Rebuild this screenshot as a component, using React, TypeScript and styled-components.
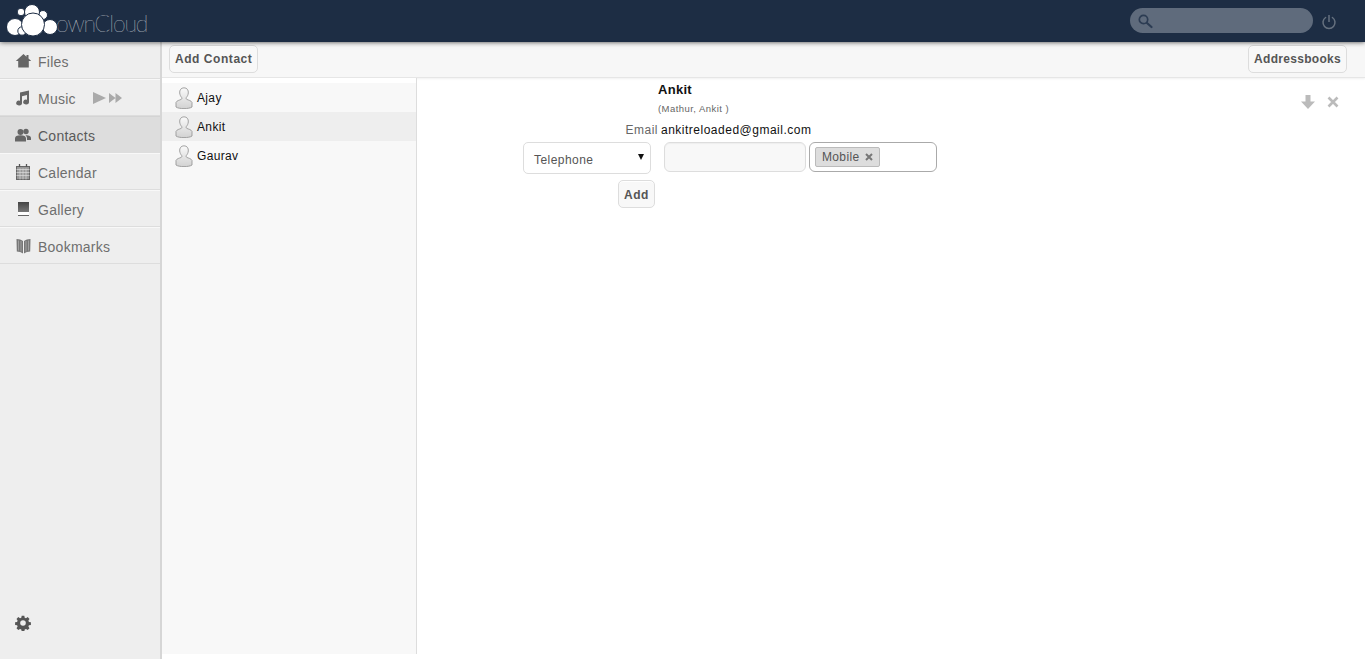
import React from "react";
import styled, { createGlobalStyle } from "styled-components";

const Global = createGlobalStyle`
  html, body { margin: 0; padding: 0; height: 100%; background: #fff; }
  #root { height: 100%; }
  * { box-sizing: border-box; }
  body { font-family: "Liberation Sans", Arial, sans-serif; font-size: 12px; color: #000; overflow: hidden; }
`;

const Page = styled.div`
  width: 1365px; height: 659px; display: flex; flex-direction: column; position: relative; overflow: hidden;
`;
const Header = styled.header`
  height: 42px; flex: none; background: #1d2d44; display: flex; align-items: center; justify-content: space-between;
  box-shadow: 0 0 5px rgba(0,0,0,.75); position: relative; z-index: 3;
`;
const Logo = styled.div`
  display: flex; align-items: flex-end; padding-left: 7px; height: 100%;
`;
const CloudSvg = styled.svg`
  position: relative; z-index: 1; flex: none;
`;
const LogoWord = styled.span`
  font-family: Lato, "Open Sans", sans-serif; font-weight: 100; font-size: 23px; letter-spacing: -1.1px; color: #fff;
  margin-left: -7px; margin-bottom: 4px; line-height: 30px;
`;
const HeaderRight = styled.div`
  display: flex; align-items: center; gap: 8px; padding-right: 28px; margin-top: -1px;
`;
const Search = styled.div`
  width: 183px; height: 25px; border-radius: 13px; background: #5f6b7c; display: flex; align-items: center; padding-left: 7px;
`;
const PowerIcon = styled.svg`
  margin-top: 2px;
`;
const Body = styled.div`
  flex: 1; display: flex; min-height: 0;
`;
const Sidebar = styled.nav`
  width: 162px; flex: none; background: #eee; border-right: 2px solid #d6d6d6; display: flex; flex-direction: column; position: relative;
`;
const NavItem = styled.a<{ $active?: boolean }>`
  height: 37px; display: flex; align-items: center; padding: 3px 0 0 15px; font-size: 14px; letter-spacing: .25px;
  color: ${p => (p.$active ? "#5a5a5a" : "#6e6e6e")};
  background: ${p => (p.$active ? "#ddd" : "transparent")};
  border-bottom: 1px solid #ddd;
  box-shadow: inset 0 1px 0 ${p => (p.$active ? "#d4d4d4" : "#f8f8f8")};
`;
const NavIcon = styled.span`
  width: 16px; height: 16px; display: inline-flex; align-items: center; justify-content: center; margin-right: 7px; margin-top: -2px;
`;
const MusicControls = styled.span`
  display: inline-flex; align-items: center; gap: 3px; margin-left: 17px; margin-top: -2px;
`;
const Settings = styled.div`
  margin-top: auto; padding: 0 0 27px 15px; height: 44px; display: flex;
`;
const Main = styled.div`
  flex: 1; min-width: 0; display: flex; flex-direction: column;
`;
const Toolbar = styled.div`
  height: 36px; flex: none; background: #f7f7f7; border-bottom: 1px solid #e6e6e6; box-shadow: 0 1px 2px rgba(0,0,0,.06);
  display: flex; align-items: flex-start; justify-content: space-between; padding: 3px 18px 0 7px;
`;
const Button = styled.button<{ $tight?: boolean }>`
  height: 28px; padding: 0 5px; font-family: "Liberation Sans", Arial, sans-serif; font-size: 12px; font-weight: 700;
  letter-spacing: ${p => (p.$tight ? ".3px" : ".55px")}; color: #555;
  background: #f8f8f8; border: 1px solid #ddd; border-radius: 5px; box-shadow: inset 0 1px 0 #fff;
`;
const Columns = styled.div`
  flex: 1; min-height: 0; display: flex; padding-bottom: 5px;
`;
const ContactList = styled.ul`
  list-style: none; margin: 0; padding: 5px 0 0; width: 255px; flex: none; background: #f8f8f8; border-right: 1px solid #ddd;
  background-image: linear-gradient(#fff, #fff); background-size: 100% 5px; background-repeat: no-repeat;
`;
const ContactRow = styled.li<{ $active?: boolean }>`
  height: 29px; display: flex; align-items: center; padding-left: 13px; gap: 4px; font-size: 12px; letter-spacing: .35px;
  background: ${p => (p.$active ? "#eee" : "transparent")}; color: #111;
`;
const Detail = styled.section`
  flex: 1; min-width: 0; position: relative; padding-left: 106px;
`;
const NameBlock = styled.div`
  padding-left: 135px; height: 42px;
`;
const Name = styled.div`
  font-size: 13px; font-weight: 700; letter-spacing: .3px; line-height: 15px; padding-top: 4px; height: 19px; color: #111;
`;
const Nick = styled.div`
  font-size: 9.5px; letter-spacing: .45px; color: #666; margin-top: 6px; line-height: 11px;
`;
const EmailRow = styled.div`
  display: flex; height: 20px; align-items: center; font-size: 12px; letter-spacing: .5px;
`;
const FieldLabel = styled.span`
  width: 135px; text-align: right; color: #666;
`;
const FieldValue = styled.span`
  margin-left: 3px; color: #111;
`;
const PhoneRow = styled.div`
  display: flex; align-items: flex-start; height: 39px; margin-top: 2px;
`;
const SelectBox = styled.div`
  width: 128px; height: 32px; border: 1px solid #ddd; border-radius: 5px; background: #fff; display: flex; align-items: center; justify-content: space-between;
  padding: 3px 6px 0 10px; font-size: 12px; letter-spacing: .45px; color: #555;
`;
const Caret = styled.span`
  width: 0; height: 0; border-left: 3px solid transparent; border-right: 3px solid transparent; border-top: 6px solid #111; margin-top: -5px;
`;
const TextInput = styled.div`
  width: 142px; height: 30px; margin-left: 13px; border: 1px solid #ddd; border-radius: 6px; background: #f8f8f8; box-shadow: inset 0 1px 1px rgba(0,0,0,.04);
`;
const TagBox = styled.div`
  width: 128px; height: 30px; margin-left: 3px; border: 1px solid #aaa; border-radius: 6px; background: #fff; display: flex; align-items: center; padding-left: 5px;
`;
const Tag = styled.span`
  height: 20px; width: 65px; border: 1px solid #bbb; border-radius: 2px; background: #ddd; display: flex; align-items: center; padding-left: 6px; gap: 6px;
  font-size: 12px; letter-spacing: .35px; color: #555;
`;
const AddRow = styled.div`
  width: 132px; display: flex; justify-content: flex-end;
`;
const AddButton = styled(Button)`
  margin-top: -1px; padding-top: 2px;
`;
const DetailActions = styled.div`
  position: absolute; top: 17px; right: 26px; display: flex; align-items: center; gap: 12px;
`;

const Avatar = () => (
  <svg width="18" height="22" viewBox="0 0 18 22">
    <defs>
      <linearGradient id="av" x1="0" y1="0" x2="0" y2="1">
        <stop offset="0" stopColor="#fafafa" />
        <stop offset="1" stopColor="#d2d2d2" />
      </linearGradient>
    </defs>
    <path d="M9 .8c3 0 4.600 2.300 4.300 5.200-.2 2-1 3.400-1.900 4.400-.5.6-.4 1.600.4 2 1.800.8 4.400 1.200 5.200 3v4.600c-1.500 1.100-4.600 1.600-8 1.600s-6.500-.5-8-1.600v-4.600c.8-1.800 3.400-2.200 5.200-3 .8-.4.9-1.400.4-2-.9-1-1.700-2.400-1.900-4.400C4.400 3.100 6 .8 9 .8z" fill="url(#av)" stroke="#999" strokeWidth=".9" />
  </svg>
);

const CloudLogo = () => (
  <CloudSvg width="56" height="42" viewBox="7 0 56 42">
    <g fill="#fff" stroke="#1d2d44" strokeWidth="1">
      <circle cx="21" cy="12" r="3.800" />
      <circle cx="43" cy="15" r="4.500" />
      <circle cx="32" cy="12" r="7.500" />
      <circle cx="15" cy="27" r="8.500" />
      <circle cx="50" cy="27" r="7.500" />
      <circle cx="22" cy="31" r="4.200" />
      <circle cx="33" cy="24.500" r="11.500" />
    </g>
  </CloudSvg>
);

const I = ({ d, w = 16, fill = "#666", vb = "0 0 16 16" }: { d: string; w?: number; fill?: string; vb?: string }) => (
  <svg width={w} height={w} viewBox={vb}><path d={d} fill={fill} /></svg>
);

export default function App() {
  return (
    <Page>
      <Global />
      <Header>
        <Logo>
          <CloudLogo />
          <LogoWord>ownCloud</LogoWord>
        </Logo>
        <HeaderRight>
          <Search>
            <svg width="16" height="16" viewBox="0 0 16 16">
              <circle cx="6.500" cy="6.500" r="4.200" fill="none" stroke="#2c3c53" strokeWidth="1.700" />
              <path d="M10 10l4.500 4" stroke="#2c3c53" strokeWidth="2.200" strokeLinecap="round" />
            </svg>
          </Search>
          <PowerIcon width="16" height="16" viewBox="0 0 16 16" fill="none" stroke="#66717f" strokeWidth="1.500">
            <path d="M8 1v7" />
            <path d="M4.600 3.500a6 6 0 1 0 6.800 0" strokeLinecap="round" />
          </PowerIcon>
        </HeaderRight>
      </Header>
      <Body>
        <Sidebar>
          <NavItem>
            <NavIcon><I d="M8.500 1L.8 8h2.400v6.500h10.600V8h2.400L13.500 5.600V2h-2v1.800z" /></NavIcon>Files
          </NavItem>
          <NavItem>
            <NavIcon><I d="M14 .5L5 2.500v8.300a2.900 2.400 0 1 0 2 2.200V6.200l5-1.100v4.700a2.900 2.400 0 1 0 2 2.200z" /></NavIcon>Music
            <MusicControls>
              <svg width="13" height="12" viewBox="0 0 13 12"><path d="M0 0l13 6-13 6z" fill="#aaa" /></svg>
              <svg width="13" height="12" viewBox="0 0 13 12"><path d="M0 1l6.500 5L0 11zM6.500 1L13 6l-6.500 5z" fill="#aaa" /></svg>
            </MusicControls>
          </NavItem>
          <NavItem $active>
            <NavIcon>
              <svg width="16" height="14" viewBox="0 0 16 14" fill="#666">
                <circle cx="5.500" cy="4" r="3" /><circle cx="11" cy="3.500" r="2.700" />
                <path d="M0 13.500v-3c0-2 2-3.200 5.500-3.200S11 8.500 11 10.500v3zM11.500 7.200c2.500 0 4.500 1 4.500 2.800v2h-4v-1.500c0-1.300-.5-2.400-1.500-3.200z" />
              </svg>
            </NavIcon>Contacts
          </NavItem>
          <NavItem>
            <NavIcon>
              <svg width="14" height="16" viewBox="0 0 14 16" fill="none" stroke="#666">
                <rect x=".5" y="2.500" width="13" height="13" fill="#999" />
                <path d="M.5 5.500h13M.5 8.500h13M.5 11.500h13M4 4.500v11M7 4.500v11M10 4.500v11" stroke="#ddd" strokeWidth=".7" />
                <path d="M3.500 0v3M10.500 0v3" stroke="#555" strokeWidth="1.300" />
              </svg>
            </NavIcon>Calendar
          </NavItem>
          <NavItem>
            <NavIcon>
              <svg width="11" height="14" viewBox="0 0 11 14">
                <defs><linearGradient id="gal" x1="0" y1="0" x2="0" y2="1"><stop offset="0" stopColor="#444" /><stop offset="1" stopColor="#777" /></linearGradient></defs>
                <rect x="0" y="0" width="11" height="10" fill="url(#gal)" />
                <rect x="0" y="10" width="11" height="3" fill="#fff" />
                <rect x="0" y="13" width="11" height="1" fill="#666" />
              </svg>
            </NavIcon>Gallery
          </NavItem>
          <NavItem>
            <NavIcon>
              <svg width="15" height="16" viewBox="0 0 15 16">
                <path d="M.5 1c2.500 0 5 .8 6.500 2v12.500C5.500 14.300 3 13.500.8 13.500zM14.500 1C12 1 9.500 1.800 8 3v12.500c1.500-1.200 4-2 6.200-2z" fill="#777" />
                <path d="M2.500 2.500v10M5 3v10.500M10 3v10.500M12.500 2.500v10" stroke="#a5a5a5" strokeWidth=".9" />
              </svg>
            </NavIcon>Bookmarks
          </NavItem>
          <Settings>
            <svg width="16" height="16" viewBox="0 0 16 16">
              <path d="M6.700 1h2.600l.4 2 1.300.5 1.700-1.100 1.800 1.800-1.100 1.700.5 1.300 2 .4v2.600l-2 .4-.5 1.300 1.100 1.700-1.800 1.800-1.700-1.100-1.300.5-.4 2H6.700l-.4-2-1.300-.5-1.700 1.100-1.800-1.800 1.100-1.700-.5-1.300-2-.4V7.600l2-.4.5-1.300-1.100-1.700 1.800-1.800L5 3.500 6.300 3z" fill="#555" transform="translate(0 -.3)" />
              <circle cx="8" cy="8" r="2.800" fill="#eee" />
            </svg>
          </Settings>
        </Sidebar>
        <Main>
          <Toolbar>
            <Button>Add Contact</Button>
            <Button $tight>Addressbooks</Button>
          </Toolbar>
          <Columns>
            <ContactList>
              <ContactRow><Avatar />Ajay</ContactRow>
              <ContactRow $active><Avatar />Ankit</ContactRow>
              <ContactRow><Avatar />Gaurav</ContactRow>
            </ContactList>
            <Detail>
              <NameBlock>
                <Name>Ankit</Name>
                <Nick>(Mathur, Ankit )</Nick>
              </NameBlock>
              <EmailRow>
                <FieldLabel>Email</FieldLabel>
                <FieldValue>ankitreloaded@gmail.com</FieldValue>
              </EmailRow>
              <PhoneRow>
                <SelectBox>Telephone<Caret /></SelectBox>
                <TextInput />
                <TagBox>
                  <Tag>Mobile
                    <svg width="8" height="8" viewBox="0 0 8 8"><path d="M1 1l6 6M7 1L1 7" stroke="#777" strokeWidth="2" /></svg>
                  </Tag>
                </TagBox>
              </PhoneRow>
              <AddRow><AddButton>Add</AddButton></AddRow>
              <DetailActions>
                <svg width="14" height="14" viewBox="0 0 14 14"><path d="M4.500 0h5v6.500H14L7 14 0 6.500h4.500z" fill="#bbb" /></svg>
                <svg width="12" height="12" viewBox="0 0 12 12"><path d="M1.500 1.500l9 9M10.500 1.500l-9 9" stroke="#bbb" strokeWidth="2.600" /></svg>
              </DetailActions>
            </Detail>
          </Columns>
        </Main>
      </Body>
    </Page>
  );
}
